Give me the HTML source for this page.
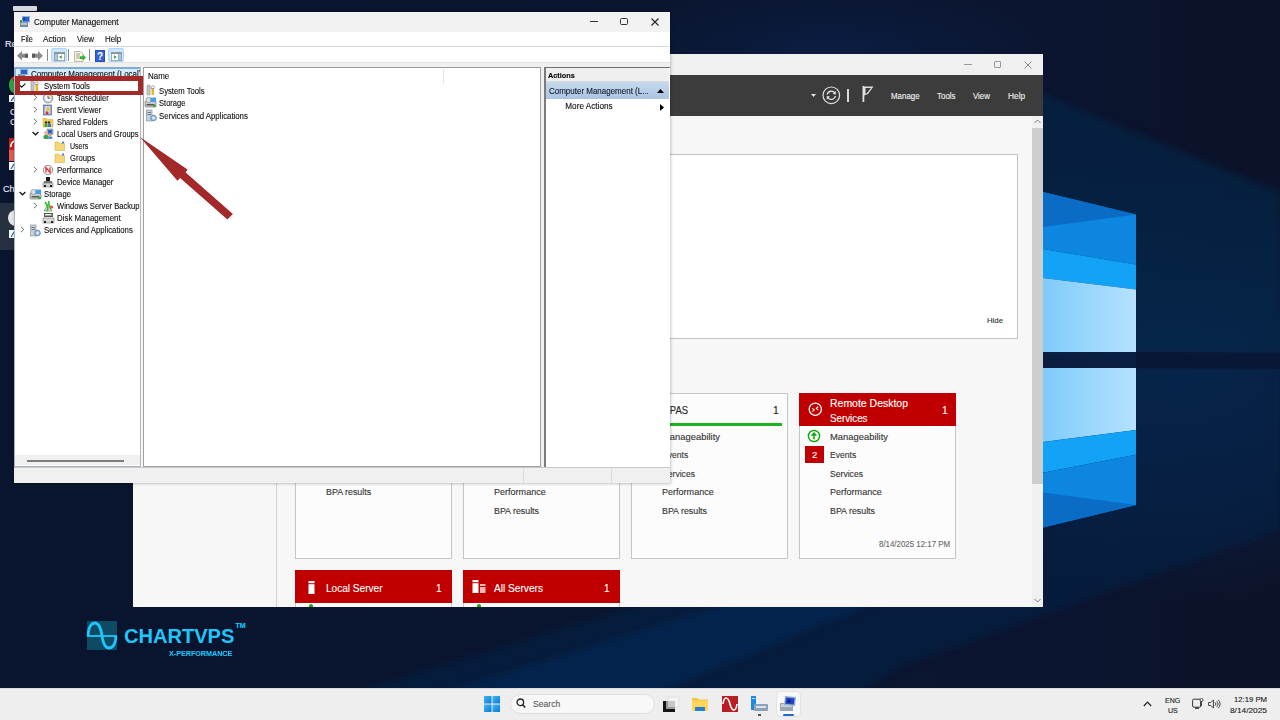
<!DOCTYPE html>
<html><head><meta charset="utf-8">
<style>
*{margin:0;padding:0;box-sizing:border-box}
html,body{width:1280px;height:720px;overflow:hidden}
body{position:relative;font-family:"Liberation Sans",sans-serif;background:#0a1631}
.a{position:absolute}
svg.a{overflow:visible}
.t{position:absolute;white-space:nowrap;font-size:8px;color:#000}
</style></head><body>

<div class="a" style="left:0px;top:0px;width:1280px;height:688px;background:radial-gradient(ellipse 220px 70px at 830px 55px,#0b1d42 0%,rgba(11,29,66,0) 100%),radial-gradient(ellipse 420px 220px at 1180px 380px,#0b2247 0%,rgba(11,34,71,0) 100%),linear-gradient(90deg,#09142e 0%,#0a1630 50%,#0b1530 80%,#0c1329 100%)"></div>
<svg class="a" style="left:0px;top:0px" width="1280" height="688" viewBox="0 0 1280 688"><defs><filter id="bl" x="-10%" y="-10%" width="120%" height="120%"><feGaussianBlur stdDeviation="3.5"/></filter></defs><g filter="url(#bl)"><polygon points="1033,90 1280,193 1280,352 1033,352" fill="#0a2750" opacity=".48"/><polygon points="330,700 1043,480 1136,368 1280,368 1280,530 1197,560 900,667 850,700" fill="#0a2750" opacity=".38"/><polygon points="740,600 880,600 640,700 420,700" fill="#0b3366" opacity=".4"/></g><polygon points="1136,352 1280,353 1280,369 1136,368" fill="#081430" opacity=".7"/></svg>
<svg class="a" style="left:1043px;top:180px" width="100" height="360" viewBox="0 0 100 360"><defs><linearGradient id="lg1" x1="0" y1="0" x2="1" y2="0"><stop offset="0" stop-color="#7fcbfa"/><stop offset="1" stop-color="#b5e2ff"/></linearGradient></defs><polygon points="0,12 93,34.4 93,84.4 0,69" fill="#0d86e0"/><polygon points="0,12 93,34.4 0,47" fill="#0a6cc4"/><polygon points="0,69 93,84.4 93,109.4 0,98" fill="#12a2f6"/><polygon points="0,98 93,109.4 93,172 0,172" fill="url(#lg1)"/><polygon points="0,188 93,188 93,250 0,262" fill="url(#lg1)"/><polygon points="0,262 93,250 93,274.7 0,292.7" fill="#12a2f6"/><polygon points="0,292.7 93,274.7 93,325 0,347.6" fill="#0d86e0"/><polygon points="0,312.6 93,325 0,347.6" fill="#0a6cc4"/></svg>
<div class="t" style="left:5.00px;top:37.28px;font-size:9px;line-height:14px;color:#e8eef8;font-weight:400;letter-spacing:0px;-webkit-text-stroke:0.12px #e8eef8;">Re</div>
<svg class="a" style="left:8px;top:75px" width="7" height="28" viewBox="0 0 7 28"><path d="M7,1 A8,9.5 0 0 0 3.2,3.2 L7,7Z" fill="#d93a2b"/><path d="M3.2,3.2 A8,9.5 0 0 0 7,19 L7,7Z" fill="#2f9e44"/><rect x="1" y="20" width="6" height="7" fill="#fff"/><path d="M3,26 L6,22" stroke="#1d6fd6" stroke-width="1.3"/></svg>
<div class="t" style="left:10.00px;top:104.78px;font-size:9px;line-height:14px;color:#e8eef8;font-weight:400;letter-spacing:0px;-webkit-text-stroke:0.12px #e8eef8;">C</div>
<div class="t" style="left:10.00px;top:114.78px;font-size:9px;line-height:14px;color:#e8eef8;font-weight:400;letter-spacing:0px;-webkit-text-stroke:0.12px #e8eef8;">C</div>
<div class="a" style="left:0px;top:203px;width:14px;height:47px;background:#263041"></div>
<svg class="a" style="left:9px;top:138px" width="6" height="33" viewBox="0 0 6 33"><rect x="0" y="0" width="6" height="23" fill="#c8201c"/><rect x="0" y="12" width="6" height="11" fill="#e05a50"/><path d="M6,3 A5,5 0 0 0 2,9" stroke="#fff" stroke-width="1.6" fill="none"/><rect x="0" y="24" width="6" height="8" fill="#fff"/><path d="M2,31 L5,26" stroke="#1d6fd6" stroke-width="1.3"/></svg>
<div class="t" style="left:3.00px;top:181.78px;font-size:9px;line-height:14px;color:#e8eef8;font-weight:400;letter-spacing:0px;-webkit-text-stroke:0.12px #e8eef8;">Ch</div>
<svg class="a" style="left:9px;top:208px" width="6" height="30" viewBox="0 0 6 30"><circle cx="7" cy="10" r="8" fill="#e8e8e8"/><rect x="0" y="22" width="6" height="8" fill="#fff"/><path d="M2,29 L5,24" stroke="#1d6fd6" stroke-width="1.3"/></svg>
<div class="a" style="left:13px;top:6px;width:24px;height:5px;background:#d5d8de;filter:blur(0.6px);border-radius:1px"></div>
<div class="a" style="left:133px;top:54px;width:910px;height:553px;background:#f7f7f7"></div>
<div class="a" style="left:133px;top:54px;width:910px;height:21px;background:#f0f0f0"></div>
<div class="a" style="left:964px;top:64px;width:8px;height:1px;background:#9a9a9a"></div>
<div class="a" style="left:994px;top:61px;width:7px;height:7px;border:1px solid #9a9a9a;border-radius:1px"></div>
<svg class="a" style="left:1024px;top:61px" width="8" height="8" viewBox="0 0 8 8"><path d="M0.5,0.5 L7.5,7.5 M7.5,0.5 L0.5,7.5" stroke="#8a8a8a" stroke-width="1"/></svg>
<div class="a" style="left:133px;top:75px;width:910px;height:41px;background:#3c3c3c"></div>
<svg class="a" style="left:811px;top:94px" width="5" height="3" viewBox="0 0 5 3"><polygon points="0,0 5,0 2.5,3" fill="#e6e6e6"/></svg>
<svg class="a" style="left:822px;top:86px" width="19" height="19" viewBox="0 0 19 19"><circle cx="9.3" cy="9.3" r="8.3" stroke="#e0e0e0" stroke-width="1.2" fill="none"/><path d="M5.2,8.6 A4.2,4.2 0 0 1 12.8,7 M13.4,10 A4.2,4.2 0 0 1 5.8,11.6" stroke="#e6e6e6" stroke-width="1.3" fill="none"/><polygon points="13.8,5 13.8,8.6 10.6,8" fill="#e6e6e6"/><polygon points="4.8,13.6 4.8,10 8,10.6" fill="#e6e6e6"/></svg>
<div class="a" style="left:847px;top:89px;width:2px;height:13px;background:#d8d8d8"></div>
<svg class="a" style="left:862px;top:86px" width="12" height="16" viewBox="0 0 12 16"><rect x="0.5" y="0" width="1.8" height="16" fill="#e0e0e0"/><polygon points="2,0.5 11.5,0.5 6,8 2,9.5" fill="#e0e0e0"/><polygon points="3.5,2 9,2 5,7 3.5,7.7" fill="#3c3c3c"/></svg>
<div class="t" style="left:891.40px;top:89.08px;font-size:9px;line-height:14px;color:#f2f2f2;font-weight:400;letter-spacing:0px;transform:scaleX(0.8793);transform-origin:0 0;-webkit-text-stroke:0.12px #f2f2f2;">Manage</div>
<div class="t" style="left:936.70px;top:89.08px;font-size:9px;line-height:14px;color:#f2f2f2;font-weight:400;letter-spacing:0px;transform:scaleX(0.8853);transform-origin:0 0;-webkit-text-stroke:0.12px #f2f2f2;">Tools</div>
<div class="t" style="left:972.90px;top:89.08px;font-size:9px;line-height:14px;color:#f2f2f2;font-weight:400;letter-spacing:0px;transform:scaleX(0.8736);transform-origin:0 0;-webkit-text-stroke:0.12px #f2f2f2;">View</div>
<div class="t" style="left:1008.00px;top:89.08px;font-size:9px;line-height:14px;color:#f2f2f2;font-weight:400;letter-spacing:0px;transform:scaleX(0.9292);transform-origin:0 0;-webkit-text-stroke:0.12px #f2f2f2;">Help</div>
<div class="a" style="left:1032px;top:116px;width:11px;height:491px;background:#f0f0f0"></div>
<div class="a" style="left:1032px;top:128px;width:11px;height:356px;background:#cdcdcd"></div>
<svg class="a" style="left:1034px;top:119px" width="7" height="5" viewBox="0 0 7 5"><path d="M0.5,4 L3.5,1 L6.5,4" stroke="#7a7a7a" stroke-width="1" fill="none"/></svg>
<svg class="a" style="left:1034px;top:598px" width="7" height="5" viewBox="0 0 7 5"><path d="M0.5,1 L3.5,4 L6.5,1" stroke="#7a7a7a" stroke-width="1" fill="none"/></svg>
<div class="a" style="left:276px;top:116px;width:1px;height:491px;background:#d2d2d2"></div>
<div class="a" style="left:295px;top:154px;width:722.5px;height:185px;background:#fff;border:1px solid #c2c2c2"></div>
<div class="t" style="left:987.00px;top:315.13px;font-size:8px;line-height:12px;color:#333;font-weight:400;letter-spacing:0px;transform:scaleX(0.9725);transform-origin:0 0;-webkit-text-stroke:0.12px #333;">Hide</div>
<div class="a" style="left:295px;top:393px;width:157px;height:166px;background:#fcfcfc;border:1px solid #c6c6c6"></div>
<div class="a" style="left:463px;top:393px;width:157px;height:166px;background:#fcfcfc;border:1px solid #c6c6c6"></div>
<div class="a" style="left:631px;top:393px;width:157px;height:166px;background:#fcfcfc;border:1px solid #c6c6c6"></div>
<div class="a" style="left:799px;top:393px;width:157px;height:166px;background:#fcfcfc;border:1px solid #c6c6c6"></div>
<div class="a" style="left:799px;top:393px;width:157px;height:33px;background:#c00000"></div>
<svg class="a" style="left:808px;top:402px" width="15" height="15" viewBox="0 0 15 15"><circle cx="7.3" cy="7.2" r="6.1" stroke="#fff" stroke-width="1.3" fill="none"/><path d="M4.4,6.3 L6.3,8 L4.4,9.7 M10.2,4.6 L8.3,6.3 L10.2,8" stroke="#fff" stroke-width="1.1" fill="none"/></svg>
<div class="t" style="left:830.00px;top:396.33px;font-size:10.3px;line-height:15px;color:#fff;font-weight:400;letter-spacing:0px;transform:scaleX(1.0168);transform-origin:0 0;-webkit-text-stroke:0.12px #fff;">Remote Desktop</div>
<div class="t" style="left:830.00px;top:411.03px;font-size:10.3px;line-height:15px;color:#fff;font-weight:400;letter-spacing:0px;transform:scaleX(0.9495);transform-origin:0 0;-webkit-text-stroke:0.12px #fff;">Services</div>
<div class="t" style="left:942.00px;top:403.33px;font-size:10.3px;line-height:15px;color:#fff;font-weight:400;letter-spacing:0px;-webkit-text-stroke:0.12px #fff;">1</div>
<div class="t" style="left:663.06px;top:403.33px;font-size:10.3px;line-height:15px;color:#222;font-weight:400;letter-spacing:0px;transform:scaleX(0.9140);transform-origin:0 0;-webkit-text-stroke:0.12px #222;">NPAS</div>
<div class="t" style="left:773.00px;top:403.33px;font-size:10.3px;line-height:15px;color:#222;font-weight:400;letter-spacing:0px;-webkit-text-stroke:0.12px #222;">1</div>
<div class="a" style="left:647px;top:423px;width:135px;height:3px;background:#1fb21f"></div>
<div class="t" style="left:494.00px;top:429.77px;font-size:9.6px;line-height:14px;color:#333;font-weight:400;letter-spacing:0px;transform:scaleX(0.9791);transform-origin:0 0;-webkit-text-stroke:0.12px #333;">Manageability</div>
<div class="t" style="left:494.00px;top:448.27px;font-size:9.6px;line-height:14px;color:#333;font-weight:400;letter-spacing:0px;transform:scaleX(0.8944);transform-origin:0 0;-webkit-text-stroke:0.12px #333;">Events</div>
<div class="t" style="left:494.00px;top:466.77px;font-size:9.6px;line-height:14px;color:#333;font-weight:400;letter-spacing:0px;transform:scaleX(0.8965);transform-origin:0 0;-webkit-text-stroke:0.12px #333;">Services</div>
<div class="t" style="left:494.00px;top:485.27px;font-size:9.6px;line-height:14px;color:#333;font-weight:400;letter-spacing:0px;transform:scaleX(0.9417);transform-origin:0 0;-webkit-text-stroke:0.12px #333;">Performance</div>
<div class="t" style="left:494.00px;top:503.77px;font-size:9.6px;line-height:14px;color:#333;font-weight:400;letter-spacing:0px;transform:scaleX(0.9201);transform-origin:0 0;-webkit-text-stroke:0.12px #333;">BPA results</div>
<div class="t" style="left:662.00px;top:429.77px;font-size:9.6px;line-height:14px;color:#333;font-weight:400;letter-spacing:0px;transform:scaleX(0.9791);transform-origin:0 0;-webkit-text-stroke:0.12px #333;">Manageability</div>
<div class="t" style="left:662.00px;top:448.27px;font-size:9.6px;line-height:14px;color:#333;font-weight:400;letter-spacing:0px;transform:scaleX(0.8944);transform-origin:0 0;-webkit-text-stroke:0.12px #333;">Events</div>
<div class="t" style="left:662.00px;top:466.77px;font-size:9.6px;line-height:14px;color:#333;font-weight:400;letter-spacing:0px;transform:scaleX(0.8965);transform-origin:0 0;-webkit-text-stroke:0.12px #333;">Services</div>
<div class="t" style="left:662.00px;top:485.27px;font-size:9.6px;line-height:14px;color:#333;font-weight:400;letter-spacing:0px;transform:scaleX(0.9417);transform-origin:0 0;-webkit-text-stroke:0.12px #333;">Performance</div>
<div class="t" style="left:662.00px;top:503.77px;font-size:9.6px;line-height:14px;color:#333;font-weight:400;letter-spacing:0px;transform:scaleX(0.9201);transform-origin:0 0;-webkit-text-stroke:0.12px #333;">BPA results</div>
<div class="t" style="left:830.00px;top:429.77px;font-size:9.6px;line-height:14px;color:#333;font-weight:400;letter-spacing:0px;transform:scaleX(0.9791);transform-origin:0 0;-webkit-text-stroke:0.12px #333;">Manageability</div>
<div class="t" style="left:830.00px;top:448.27px;font-size:9.6px;line-height:14px;color:#333;font-weight:400;letter-spacing:0px;transform:scaleX(0.8944);transform-origin:0 0;-webkit-text-stroke:0.12px #333;">Events</div>
<div class="t" style="left:830.00px;top:466.77px;font-size:9.6px;line-height:14px;color:#333;font-weight:400;letter-spacing:0px;transform:scaleX(0.8965);transform-origin:0 0;-webkit-text-stroke:0.12px #333;">Services</div>
<div class="t" style="left:830.00px;top:485.27px;font-size:9.6px;line-height:14px;color:#333;font-weight:400;letter-spacing:0px;transform:scaleX(0.9417);transform-origin:0 0;-webkit-text-stroke:0.12px #333;">Performance</div>
<div class="t" style="left:830.00px;top:503.77px;font-size:9.6px;line-height:14px;color:#333;font-weight:400;letter-spacing:0px;transform:scaleX(0.9201);transform-origin:0 0;-webkit-text-stroke:0.12px #333;">BPA results</div>
<div class="t" style="left:326.00px;top:485.27px;font-size:9.6px;line-height:14px;color:#333;font-weight:400;letter-spacing:0px;transform:scaleX(0.9242);transform-origin:0 0;-webkit-text-stroke:0.12px #333;">BPA results</div>
<svg class="a" style="left:807px;top:429px" width="14" height="14" viewBox="0 0 14 14"><circle cx="7" cy="7" r="5.6" stroke="#11a811" stroke-width="1.5" fill="#fff"/><path d="M7,10.2 L7,4.5 M4.6,6.8 L7,4.2 L9.4,6.8" stroke="#11a811" stroke-width="1.6" fill="none"/></svg>
<div class="a" style="left:805px;top:446px;width:19px;height:16.5px;background:#c00000"></div>
<div class="t" style="left:812.00px;top:447.81px;font-size:9.5px;line-height:14px;color:#fff;font-weight:400;letter-spacing:0px;-webkit-text-stroke:0.12px #fff;">2</div>
<div class="t" style="left:878.75px;top:539.36px;font-size:8.2px;line-height:12px;color:#6b6b6b;font-weight:400;letter-spacing:0px;transform:scaleX(0.9647);transform-origin:0 0;-webkit-text-stroke:0.12px #6b6b6b;">8/14/2025 12:17 PM</div>
<div class="a" style="left:295px;top:570px;width:157px;height:37px;background:#fcfcfc;border:1px solid #c6c6c6;border-bottom:none"></div>
<div class="a" style="left:295px;top:570px;width:157px;height:33px;background:#c00000"></div>
<div class="t" style="left:326.00px;top:581.33px;font-size:10.3px;line-height:15px;color:#fff;font-weight:400;letter-spacing:0px;transform:scaleX(0.9771);transform-origin:0 0;-webkit-text-stroke:0.12px #fff;">Local Server</div>
<div class="t" style="left:436.00px;top:581.44px;font-size:10px;line-height:15px;color:#fff;font-weight:400;letter-spacing:0px;-webkit-text-stroke:0.12px #fff;">1</div>
<div class="a" style="left:463px;top:570px;width:157px;height:37px;background:#fcfcfc;border:1px solid #c6c6c6;border-bottom:none"></div>
<div class="a" style="left:463px;top:570px;width:157px;height:33px;background:#c00000"></div>
<div class="t" style="left:494.00px;top:581.33px;font-size:10.3px;line-height:15px;color:#fff;font-weight:400;letter-spacing:0px;transform:scaleX(0.9840);transform-origin:0 0;-webkit-text-stroke:0.12px #fff;">All Servers</div>
<div class="t" style="left:604.00px;top:581.44px;font-size:10px;line-height:15px;color:#fff;font-weight:400;letter-spacing:0px;-webkit-text-stroke:0.12px #fff;">1</div>
<svg class="a" style="left:308px;top:581px" width="7" height="13" viewBox="0 0 7 13"><rect x="0.5" y="0" width="6" height="2.2" fill="#fff"/><rect x="0.5" y="3.2" width="6" height="9.8" fill="#fff"/></svg>
<svg class="a" style="left:472px;top:580px" width="14" height="13" viewBox="0 0 14 13"><rect x="0.5" y="0" width="6" height="2.2" fill="#fff"/><rect x="0.5" y="3.2" width="6" height="9.8" fill="#fff"/><rect x="8" y="4" width="5.5" height="2" fill="#f2b8b8"/><rect x="8" y="7" width="5.5" height="6" fill="#f2b8b8"/></svg>
<div class="a" style="left:309px;top:604px;width:4px;height:3px;background:#11a811;border-radius:2px 2px 0 0"></div>
<div class="a" style="left:477px;top:604px;width:4px;height:3px;background:#11a811;border-radius:2px 2px 0 0"></div>
<div class="a" style="left:14px;top:12px;width:656px;height:471px;box-shadow:0 0 2.5px 0.5px rgba(0,0,0,.22)"></div>
<div class="a" style="left:14px;top:12px;width:656px;height:471px;background:#f0f0f0"></div>
<div class="a" style="left:14px;top:12px;width:656px;height:20px;background:#f2f2f2"></div>
<svg class="a" style="left:20px;top:16px" width="10" height="11" viewBox="0 0 10 11"><rect x="0" y="6" width="8" height="5" fill="#7a8a9a"/><rect x="1" y="7" width="6" height="2" fill="#b8c4d0"/><rect x="2" y="0" width="8" height="6.5" fill="#8fb0d8"/><rect x="3" y="1" width="6" height="4.5" fill="#2b63c9"/><circle cx="4" cy="3" r="1.5" fill="#1a3fa0"/><rect x="0" y="4" width="2" height="2" fill="#3aa63a"/></svg>
<div class="t" style="left:34.00px;top:15.79px;font-size:8.7px;line-height:13px;color:#111;font-weight:400;letter-spacing:0px;transform:scaleX(0.9267);transform-origin:0 0;-webkit-text-stroke:0.12px #111;">Computer Management</div>
<div class="a" style="left:590px;top:21px;width:8px;height:1px;background:#333"></div>
<div class="a" style="left:620px;top:18px;width:8px;height:7px;border:1.2px solid #333;border-radius:1.5px"></div>
<svg class="a" style="left:651px;top:18px" width="8" height="8" viewBox="0 0 8 8"><path d="M0.5,0.5 L7.5,7.5 M7.5,0.5 L0.5,7.5" stroke="#222" stroke-width="1.1"/></svg>
<div class="a" style="left:14px;top:32px;width:656px;height:15px;background:#fff"></div>
<div class="a" style="left:14px;top:46px;width:656px;height:1px;background:#d9d9d9"></div>
<div class="t" style="left:20.80px;top:34.06px;font-size:8.2px;line-height:12px;color:#111;font-weight:400;letter-spacing:0px;transform:scaleX(0.8855);transform-origin:0 0;-webkit-text-stroke:0.12px #111;">File</div>
<div class="t" style="left:43.30px;top:34.06px;font-size:8.2px;line-height:12px;color:#111;font-weight:400;letter-spacing:0px;transform:scaleX(0.9960);transform-origin:0 0;-webkit-text-stroke:0.12px #111;">Action</div>
<div class="t" style="left:77.00px;top:34.06px;font-size:8.2px;line-height:12px;color:#111;font-weight:400;letter-spacing:0px;transform:scaleX(0.9645);transform-origin:0 0;-webkit-text-stroke:0.12px #111;">View</div>
<div class="t" style="left:104.70px;top:34.06px;font-size:8.2px;line-height:12px;color:#111;font-weight:400;letter-spacing:0px;transform:scaleX(0.9665);transform-origin:0 0;-webkit-text-stroke:0.12px #111;">Help</div>
<div class="a" style="left:14px;top:47px;width:656px;height:15px;background:#fff"></div>
<div class="a" style="left:14px;top:62px;width:656px;height:1px;background:#e3e3e3"></div>
<div class="a" style="left:14px;top:63px;width:656px;height:4px;background:#f0f0f0"></div>
<svg class="a" style="left:17px;top:51px" width="11" height="10" viewBox="0 0 11 10"><polygon points="0,4.7 5,0 5,2.7 11,2.7 11,6.7 5,6.7 5,9.5" fill="#8c8c8c"/><rect x="8" y="2.7" width="3" height="4" fill="#5c5c5c"/></svg>
<svg class="a" style="left:32px;top:51px" width="11" height="10" viewBox="0 0 11 10"><polygon points="11,4.7 6,0 6,2.7 0,2.7 0,6.7 6,6.7 6,9.5" fill="#8c8c8c"/><rect x="0" y="2.7" width="3" height="4" fill="#5c5c5c"/></svg>
<div class="a" style="left:47px;top:49px;width:1px;height:12px;background:#8a8a8a"></div>
<div class="a" style="left:51px;top:48px;width:16px;height:14px;background:#cce8ff;border:1px solid #a8d8ff;border-radius:2px"></div>
<svg class="a" style="left:54px;top:52px" width="11" height="9" viewBox="0 0 11 9"><rect x="0" y="0" width="11" height="9" fill="#8e96a0"/><rect x="0.8" y="2" width="2.6" height="6.2" fill="#aac8e8"/><rect x="4" y="2" width="6.2" height="6.2" fill="#fff"/><polygon points="5.2,5.1 7.6,3.2 7.6,7" fill="#17a317"/></svg>
<div class="a" style="left:68px;top:49px;width:1px;height:12px;background:#8a8a8a"></div>
<svg class="a" style="left:74px;top:51px" width="12" height="11" viewBox="0 0 12 11"><path d="M0.5,0.5 L6.5,0.5 L9,3 L9,10.5 L0.5,10.5Z" fill="#f8f4e0" stroke="#a8a8a0" stroke-width=".8"/><path d="M2,3 L6,3 M2,5 L6,5 M2,7 L6,7" stroke="#8a8a80" stroke-width=".8"/><polygon points="6,5.2 9,5.2 9,3.6 12,6.6 9,9.6 9,8 6,8" fill="#2fb52f"/></svg>
<div class="a" style="left:89px;top:49px;width:1px;height:12px;background:#8a8a8a"></div>
<svg class="a" style="left:95px;top:50px" width="10" height="12" viewBox="0 0 10 12"><rect x="0" y="0" width="10" height="12" fill="#1f48b8"/><rect x="0.7" y="0.7" width="8.6" height="10.6" fill="#3362d6"/><text x="5" y="9.8" font-family="Liberation Sans" font-weight="700" font-size="10" text-anchor="middle" fill="#fff">?</text></svg>
<div class="a" style="left:108px;top:48px;width:16px;height:14px;background:#cce8ff;border:1px solid #a8d8ff;border-radius:2px"></div>
<svg class="a" style="left:111px;top:52px" width="11" height="9" viewBox="0 0 11 9"><rect x="0" y="0" width="11" height="9" fill="#8e96a0"/><rect x="7.6" y="2" width="2.6" height="6.2" fill="#aac8e8"/><rect x="0.8" y="2" width="6.2" height="6.2" fill="#fff"/><polygon points="5.6,5.1 3.2,3.2 3.2,7" fill="#17a317"/></svg>
<div class="a" style="left:14px;top:67px;width:127px;height:400px;background:#fff;border:1px solid #a9b4c0;border-top-color:#8fa6bf"></div>
<div class="a" style="left:15px;top:67.5px;width:125px;height:9px;background:#d6eafb;border-top:1px solid #6fb2ee;border-left:1px solid #6fb2ee"></div>
<svg class="a" style="left:17.5px;top:68.5px" width="10" height="9" viewBox="0 0 10 9"><rect x="0" y="5" width="7" height="4" fill="#7a8a9a"/><rect x="2" y="0" width="8" height="6" fill="#8fb0d8"/><rect x="3" y="1" width="6" height="4" fill="#2b63c9"/></svg>
<div class="t" style="left:31.00px;top:69.36px;font-size:8.2px;line-height:12px;color:#111;font-weight:400;letter-spacing:0px;transform:scaleX(0.9750);transform-origin:0 0;-webkit-text-stroke:0.12px #111;">Computer Management (Local)</div>
<div class="a" style="left:141px;top:67px;width:2px;height:400px;background:#f7f7f7"></div>
<div class="a" style="left:143px;top:67px;width:398px;height:400px;background:#fff;border:1px solid #a0a0a0;border-top:1.5px solid #9a9a9a"></div>
<div class="a" style="left:544px;top:67px;width:126px;height:400px;background:#fff;border-left:2px solid #7c7c7c;border-top:1.5px solid #707070"></div>
<div class="a" style="left:14px;top:467px;width:656px;height:16px;background:#f0f0f0;border-top:1px solid #c8c8c8"></div>
<div class="a" style="left:523px;top:468px;width:1px;height:15px;background:#dadada"></div>
<div class="a" style="left:611px;top:468px;width:1px;height:15px;background:#dadada"></div>
<div class="a" style="left:15px;top:455px;width:125px;height:10px;background:#f0f0f0"></div>
<div class="a" style="left:27px;top:460px;width:97px;height:1.6px;background:#7d7d7d"></div>
<svg class="a" style="left:19px;top:83.3px" width="7" height="5" viewBox="0 0 7 5"><path d="M0.6,2.2 L2.6,4.2 L6.4,0.6" stroke="#111" stroke-width="1.2" fill="none"/></svg>
<svg class="a" style="left:30.299999999999997px;top:80.8px" width="11" height="11" viewBox="0 0 11 11"><rect x="1" y="0" width="3" height="10" rx="1" fill="#c8c8c8" stroke="#8a8a8a" stroke-width=".6"/><rect x="5.5" y="3" width="2.5" height="7" fill="#e8b820"/><circle cx="6.7" cy="2.5" r="1.7" fill="none" stroke="#8a8a8a" stroke-width=".8"/></svg>
<div class="t" style="left:43.80px;top:80.86px;font-size:8.2px;line-height:12px;color:#111;font-weight:400;letter-spacing:0px;transform:scaleX(0.9463);transform-origin:0 0;-webkit-text-stroke:0.12px #111;">System Tools</div>
<svg class="a" style="left:32.8px;top:94.3px" width="5" height="7" viewBox="0 0 5 7"><path d="M1,0.8 L3.8,3.5 L1,6.2" stroke="#6a6a6a" stroke-width="1" fill="none"/></svg>
<svg class="a" style="left:43.3px;top:92.8px" width="11" height="11" viewBox="0 0 11 11"><circle cx="5" cy="5.2" r="4.8" fill="#b4bcc6" stroke="#7d8894" stroke-width=".7"/><circle cx="5" cy="5.2" r="3.4" fill="#f4f6f8"/><path d="M5,2.6 L5,5.2 L7.2,5.2" stroke="#444" stroke-width=".9" fill="none"/><path d="M6.5,0.6 A4.8,4.8 0 0 1 9.6,3.6 L6.5,3.6Z" fill="#e8c040"/></svg>
<div class="t" style="left:56.80px;top:92.86px;font-size:8.2px;line-height:12px;color:#111;font-weight:400;letter-spacing:0px;transform:scaleX(0.9250);transform-origin:0 0;-webkit-text-stroke:0.12px #111;">Task Scheduler</div>
<svg class="a" style="left:32.8px;top:106.3px" width="5" height="7" viewBox="0 0 5 7"><path d="M1,0.8 L3.8,3.5 L1,6.2" stroke="#6a6a6a" stroke-width="1" fill="none"/></svg>
<svg class="a" style="left:43.3px;top:104.8px" width="11" height="11" viewBox="0 0 11 11"><rect x="0.5" y="0" width="8" height="10" fill="#7a94c0" stroke="#4a5c80" stroke-width=".6"/><rect x="1.5" y="1" width="6" height="8" fill="#c9d6ee"/><polygon points="5,1.5 7.3,5.5 2.7,5.5" fill="#f2c41e"/><circle cx="4" cy="7.8" r="1.5" fill="#e03030"/></svg>
<div class="t" style="left:56.80px;top:104.86px;font-size:8.2px;line-height:12px;color:#111;font-weight:400;letter-spacing:0px;transform:scaleX(0.9177);transform-origin:0 0;-webkit-text-stroke:0.12px #111;">Event Viewer</div>
<svg class="a" style="left:32.8px;top:118.3px" width="5" height="7" viewBox="0 0 5 7"><path d="M1,0.8 L3.8,3.5 L1,6.2" stroke="#6a6a6a" stroke-width="1" fill="none"/></svg>
<svg class="a" style="left:43.3px;top:116.8px" width="11" height="11" viewBox="0 0 11 11"><path d="M0,1.5 L3.5,1.5 L4.5,2.5 L10,2.5 L10,10 L0,10Z" fill="#f0cf60" stroke="#c8a030" stroke-width=".5"/><circle cx="3" cy="5.5" r="1.3" fill="#333"/><circle cx="6" cy="5.5" r="1.3" fill="#333"/><rect x="1.5" y="7" width="3" height="3" fill="#3aa04a"/><rect x="5" y="7" width="3" height="3" fill="#3a7ad0"/></svg>
<div class="t" style="left:56.80px;top:116.86px;font-size:8.2px;line-height:12px;color:#111;font-weight:400;letter-spacing:0px;transform:scaleX(0.9079);transform-origin:0 0;-webkit-text-stroke:0.12px #111;">Shared Folders</div>
<svg class="a" style="left:32.3px;top:131.3px" width="7" height="5" viewBox="0 0 7 5"><path d="M0.6,1 L3.5,3.8 L6.4,1" stroke="#111" stroke-width="1.2" fill="none"/></svg>
<svg class="a" style="left:43.3px;top:128.8px" width="11" height="11" viewBox="0 0 11 11"><rect x="4" y="0" width="6" height="5.5" fill="#9ab4d4" stroke="#6a7a90" stroke-width=".5"/><rect x="5" y="1" width="4" height="3.5" fill="#2b63c9"/><circle cx="3" cy="4" r="2" fill="#e8b890"/><rect x="0.5" y="6" width="5" height="4" rx="1.5" fill="#3aa04a"/><circle cx="7" cy="6" r="1.6" fill="#d0a070"/><rect x="5" y="7.5" width="4.5" height="2.5" rx="1" fill="#4a90e0"/></svg>
<div class="t" style="left:56.80px;top:128.86px;font-size:8.2px;line-height:12px;color:#111;font-weight:400;letter-spacing:0px;transform:scaleX(0.9240);transform-origin:0 0;-webkit-text-stroke:0.12px #111;">Local Users and Groups</div>
<svg class="a" style="left:55.0px;top:140.8px" width="11" height="11" viewBox="0 0 11 11"><path d="M0,1 L3.5,1 L4.5,2.3 L9.5,2.3 L9.5,9.5 L0,9.5Z" fill="#f5d77a" stroke="#d6b04a" stroke-width=".6"/><rect x="7" y="0.5" width="2" height="2" fill="#3a8ad0"/></svg>
<div class="t" style="left:69.50px;top:140.86px;font-size:8.2px;line-height:12px;color:#111;font-weight:400;letter-spacing:0px;transform:scaleX(0.8593);transform-origin:0 0;-webkit-text-stroke:0.12px #111;">Users</div>
<svg class="a" style="left:55.0px;top:152.8px" width="11" height="11" viewBox="0 0 11 11"><path d="M0,1 L3.5,1 L4.5,2.3 L9.5,2.3 L9.5,9.5 L0,9.5Z" fill="#f5d77a" stroke="#d6b04a" stroke-width=".6"/><rect x="7" y="0.5" width="2" height="2" fill="#3a8ad0"/></svg>
<div class="t" style="left:69.50px;top:152.86px;font-size:8.2px;line-height:12px;color:#111;font-weight:400;letter-spacing:0px;transform:scaleX(0.9334);transform-origin:0 0;-webkit-text-stroke:0.12px #111;">Groups</div>
<svg class="a" style="left:32.8px;top:166.3px" width="5" height="7" viewBox="0 0 5 7"><path d="M1,0.8 L3.8,3.5 L1,6.2" stroke="#6a6a6a" stroke-width="1" fill="none"/></svg>
<svg class="a" style="left:43.3px;top:164.8px" width="11" height="11" viewBox="0 0 11 11"><circle cx="5" cy="5" r="4.7" fill="#f4f4f4" stroke="#7a7a7a" stroke-width=".8"/><path d="M3,7.5 L3,2.5 L7,7.5 L7,2.5" stroke="#e02020" stroke-width="1.2" fill="none"/></svg>
<div class="t" style="left:56.80px;top:164.86px;font-size:8.2px;line-height:12px;color:#111;font-weight:400;letter-spacing:0px;transform:scaleX(0.9640);transform-origin:0 0;-webkit-text-stroke:0.12px #111;">Performance</div>
<svg class="a" style="left:43.3px;top:176.8px" width="11" height="11" viewBox="0 0 11 11"><rect x="3" y="0" width="4" height="4" fill="#1a1a1a"/><rect x="1" y="4" width="8" height="2" fill="#777"/><rect x="0" y="6" width="10" height="4" fill="#d0d0d0" stroke="#666" stroke-width=".5"/><rect x="1" y="8" width="2" height="2" fill="#222"/><rect x="7" y="8" width="2" height="2" fill="#222"/></svg>
<div class="t" style="left:56.80px;top:176.86px;font-size:8.2px;line-height:12px;color:#111;font-weight:400;letter-spacing:0px;transform:scaleX(0.9463);transform-origin:0 0;-webkit-text-stroke:0.12px #111;">Device Manager</div>
<svg class="a" style="left:19.299999999999997px;top:191.3px" width="7" height="5" viewBox="0 0 7 5"><path d="M0.6,1 L3.5,3.8 L6.4,1" stroke="#111" stroke-width="1.2" fill="none"/></svg>
<svg class="a" style="left:30.299999999999997px;top:188.8px" width="11" height="11" viewBox="0 0 11 11"><rect x="0" y="4" width="11" height="6" rx="1" fill="#c8ccd0" stroke="#6a6a6a" stroke-width=".6"/><rect x="1.5" y="7" width="8" height="1.5" fill="#555"/><circle cx="3.5" cy="3" r="2.6" fill="#e0e0e0" stroke="#777" stroke-width=".6"/><rect x="5.5" y="0.5" width="5.5" height="4.5" fill="#4aa0e8"/><rect x="8" y="8" width="3" height="2" fill="#3ab03a"/></svg>
<div class="t" style="left:43.80px;top:188.86px;font-size:8.2px;line-height:12px;color:#111;font-weight:400;letter-spacing:0px;transform:scaleX(0.9401);transform-origin:0 0;-webkit-text-stroke:0.12px #111;">Storage</div>
<svg class="a" style="left:32.8px;top:202.3px" width="5" height="7" viewBox="0 0 5 7"><path d="M1,0.8 L3.8,3.5 L1,6.2" stroke="#6a6a6a" stroke-width="1" fill="none"/></svg>
<svg class="a" style="left:43.3px;top:200.8px" width="11" height="11" viewBox="0 0 11 11"><path d="M1,10 L5,3 L9,10Z" fill="#e0e0e0" stroke="#666" stroke-width=".6"/><path d="M2,1 C4,4 6,6 4,10" stroke="#30c030" stroke-width="1.8" fill="none"/><path d="M6,0 C5,3 7,6 8,8" stroke="#30c030" stroke-width="1.6" fill="none"/><circle cx="8.5" cy="6" r="1.6" fill="#d06030"/></svg>
<div class="t" style="left:56.80px;top:200.86px;font-size:8.2px;line-height:12px;color:#111;font-weight:400;letter-spacing:0px;transform:scaleX(0.9250);transform-origin:0 0;-webkit-text-stroke:0.12px #111;">Windows Server Backup</div>
<svg class="a" style="left:43.3px;top:212.8px" width="11" height="11" viewBox="0 0 11 11"><rect x="1" y="0" width="9" height="4" fill="#555" /><rect x="2" y="1" width="7" height="1.5" fill="#eee"/><rect x="8" y="1" width="2" height="1.5" fill="#3ab03a"/><rect x="0" y="5" width="11" height="5" fill="#d8d8d8" stroke="#666" stroke-width=".5"/><rect x="1" y="8" width="2" height="2" fill="#222"/><rect x="8" y="8" width="2" height="2" fill="#222"/></svg>
<div class="t" style="left:56.80px;top:212.86px;font-size:8.2px;line-height:12px;color:#111;font-weight:400;letter-spacing:0px;transform:scaleX(0.9647);transform-origin:0 0;-webkit-text-stroke:0.12px #111;">Disk Management</div>
<svg class="a" style="left:20.299999999999997px;top:226.3px" width="5" height="7" viewBox="0 0 5 7"><path d="M1,0.8 L3.8,3.5 L1,6.2" stroke="#6a6a6a" stroke-width="1" fill="none"/></svg>
<svg class="a" style="left:30.299999999999997px;top:224.8px" width="11" height="11" viewBox="0 0 11 11"><rect x="0.5" y="0" width="5.5" height="11" fill="#c8d0d8" stroke="#7a8a9a" stroke-width=".6"/><rect x="1.5" y="2" width="3.5" height="1" fill="#6a7a8a"/><rect x="1.5" y="4" width="3.5" height="1" fill="#6a7a8a"/><circle cx="7.5" cy="8" r="2.8" fill="#a8c8e8" stroke="#4a7ab0" stroke-width=".8"/><circle cx="7.5" cy="8" r="1" fill="#fff"/></svg>
<div class="t" style="left:43.80px;top:224.86px;font-size:8.2px;line-height:12px;color:#111;font-weight:400;letter-spacing:0px;transform:scaleX(0.9524);transform-origin:0 0;-webkit-text-stroke:0.12px #111;">Services and Applications</div>
<div class="a" style="left:140px;top:67px;width:3px;height:400px;background:#f7f7f7;border-left:1px solid #b4b8bf"></div>
<div class="a" style="left:15px;top:76px;width:128px;height:19px;border:5px solid #a42a2a;border-bottom-width:4.7px"></div>
<div class="t" style="left:148.00px;top:70.86px;font-size:8.2px;line-height:12px;color:#111;font-weight:400;letter-spacing:0px;transform:scaleX(0.9692);transform-origin:0 0;-webkit-text-stroke:0.12px #111;">Name</div>
<div class="a" style="left:443px;top:69px;width:1px;height:15px;background:#e5e5e5"></div>
<svg class="a" style="left:146px;top:85px" width="10" height="11" viewBox="0 0 10 11"><rect x="1" y="0" width="3" height="10" rx="1" fill="#c8c8c8" stroke="#8a8a8a" stroke-width=".6"/><rect x="5.5" y="3" width="2.5" height="7" fill="#e8b820"/><circle cx="6.7" cy="2.5" r="1.7" fill="none" stroke="#8a8a8a" stroke-width=".8"/></svg>
<div class="t" style="left:158.70px;top:85.66px;font-size:8.2px;line-height:12px;color:#111;font-weight:400;letter-spacing:0px;transform:scaleX(0.9401);transform-origin:0 0;-webkit-text-stroke:0.12px #111;">System Tools</div>
<svg class="a" style="left:145px;top:97px" width="11" height="11" viewBox="0 0 11 11"><rect x="0" y="4" width="11" height="6" rx="1" fill="#c8ccd0" stroke="#6a6a6a" stroke-width=".6"/><rect x="1.5" y="7" width="8" height="1.5" fill="#555"/><circle cx="3.5" cy="3" r="2.6" fill="#e0e0e0" stroke="#777" stroke-width=".6"/><rect x="5.5" y="0.5" width="5.5" height="4.5" fill="#4aa0e8"/><rect x="8" y="8" width="3" height="2" fill="#3ab03a"/></svg>
<div class="t" style="left:158.70px;top:98.26px;font-size:8.2px;line-height:12px;color:#111;font-weight:400;letter-spacing:0px;transform:scaleX(0.9227);transform-origin:0 0;-webkit-text-stroke:0.12px #111;">Storage</div>
<svg class="a" style="left:146px;top:110px" width="11" height="11" viewBox="0 0 11 11"><rect x="0.5" y="0" width="5.5" height="11" fill="#c8d0d8" stroke="#7a8a9a" stroke-width=".6"/><rect x="1.5" y="2" width="3.5" height="1" fill="#6a7a8a"/><rect x="1.5" y="4" width="3.5" height="1" fill="#6a7a8a"/><circle cx="7.5" cy="8" r="2.8" fill="#a8c8e8" stroke="#4a7ab0" stroke-width=".8"/><circle cx="7.5" cy="8" r="1" fill="#fff"/></svg>
<div class="t" style="left:158.70px;top:110.86px;font-size:8.2px;line-height:12px;color:#111;font-weight:400;letter-spacing:0px;transform:scaleX(0.9524);transform-origin:0 0;-webkit-text-stroke:0.12px #111;">Services and Applications</div>
<div class="a" style="left:546px;top:68px;width:123px;height:13.5px;background:#efefef;border-bottom:1px solid #dadada"></div>
<div class="t" style="left:548.20px;top:70.10px;font-size:7.8px;line-height:12px;color:#000;font-weight:700;letter-spacing:0px;transform:scaleX(0.9370);transform-origin:0 0;-webkit-text-stroke:0.12px #000;">Actions</div>
<div class="a" style="left:546px;top:82px;width:123px;height:17px;background:linear-gradient(#c6daee,#a9c4e2)"></div>
<div class="t" style="left:549.30px;top:85.96px;font-size:8.2px;line-height:12px;color:#1a1a2a;font-weight:400;letter-spacing:0px;transform:scaleX(0.9751);transform-origin:0 0;-webkit-text-stroke:0.12px #1a1a2a;">Computer Management (L...</div>
<svg class="a" style="left:657px;top:89px" width="7" height="4" viewBox="0 0 7 4"><polygon points="0,4 3.5,0 7,4" fill="#000"/></svg>
<div class="t" style="left:565.30px;top:101.46px;font-size:8.2px;line-height:12px;color:#111;font-weight:400;letter-spacing:0px;transform:scaleX(1.0000);transform-origin:0 0;-webkit-text-stroke:0.12px #111;">More Actions</div>
<svg class="a" style="left:660px;top:103.5px" width="4" height="7" viewBox="0 0 4 7"><polygon points="0,0 4,3.5 0,7" fill="#000"/></svg>
<svg class="a" style="left:0px;top:0px" width="300" height="300" viewBox="0 0 300 300"><polygon points="139.9,136.9 187.5,169.6 185.7,172.4 232.9,214 227.4,219.6 180.1,177.9 177.4,180.7" fill="#a3282a"/></svg>
<svg class="a" style="left:87px;top:621px" width="30" height="29" viewBox="0 0 30 29"><rect width="30" height="29" fill="#0d4b64"/><path d="M1.2,15 C1.2,5 5,2 8,2 C12,2 14,8 15,15 C16,22 18,27 22,27 C25,27 28.8,24 28.8,15" stroke="#1ec6fc" stroke-width="2.8" fill="none"/><path d="M0,15 L30,15" stroke="#1ec6fc" stroke-width="1.8"/></svg>
<div class="t" style="left:124.40px;top:621.64px;font-size:19.5px;line-height:29px;color:#1ec6fc;font-weight:700;letter-spacing:0px;transform:scaleX(1.0283);transform-origin:0 0;-webkit-text-stroke:0.12px #1ec6fc;">CHARTVPS</div>
<div class="t" style="left:235.50px;top:620.97px;font-size:7px;line-height:10px;color:#1ec6fc;font-weight:700;letter-spacing:0px;-webkit-text-stroke:0.12px #1ec6fc;">TM</div>
<div class="t" style="left:169.40px;top:647.51px;font-size:7.2px;line-height:11px;color:#1ec6fc;font-weight:700;letter-spacing:0px;transform:scaleX(0.9968);transform-origin:0 0;-webkit-text-stroke:0.12px #1ec6fc;">X-PERFORMANCE</div>
<div class="a" style="left:0px;top:688px;width:1280px;height:32px;background:#eeeeee;border-top:1px solid #d9dce0"></div>
<svg class="a" style="left:484px;top:696px" width="16" height="16" viewBox="0 0 16 16"><defs><linearGradient id="wl" x1="0" y1="0" x2="1" y2="1"><stop offset="0" stop-color="#3fbaf6"/><stop offset="1" stop-color="#0a78d6"/></linearGradient></defs><rect x="0" y="0" width="7.5" height="7.5" fill="url(#wl)"/><rect x="8.5" y="0" width="7.5" height="7.5" fill="url(#wl)"/><rect x="0" y="8.5" width="7.5" height="7.5" fill="url(#wl)"/><rect x="8.5" y="8.5" width="7.5" height="7.5" fill="url(#wl)"/></svg>
<div class="a" style="left:510px;top:694px;width:145px;height:20px;background:#f8f8f8;border:1px solid #dedede;border-radius:10px"></div>
<svg class="a" style="left:516px;top:698px" width="10" height="11" viewBox="0 0 10 11"><circle cx="4.3" cy="4.3" r="3.3" stroke="#222" stroke-width="1.3" fill="none"/><path d="M6.7,6.7 L9.3,9.5" stroke="#222" stroke-width="1.4"/></svg>
<div class="t" style="left:533.30px;top:698.39px;font-size:8.7px;line-height:13px;color:#5a5a5a;font-weight:400;letter-spacing:0px;transform:scaleX(0.9904);transform-origin:0 0;-webkit-text-stroke:0.12px #5a5a5a;">Search</div>
<svg class="a" style="left:663px;top:697px" width="17" height="15" viewBox="0 0 17 15"><rect x="5" y="0" width="11" height="10" fill="#f4f4f4" stroke="#d8d8d8" stroke-width=".6"/><rect x="0" y="4" width="12" height="11" fill="#151515"/><rect x="3" y="4" width="9" height="8" fill="#9a9a9a"/><rect x="5" y="4" width="7" height="6" fill="#c8c8c8"/></svg>
<svg class="a" style="left:692px;top:697px" width="17" height="14" viewBox="0 0 17 14"><path d="M0,1 L5,1 L6.5,2.5 L16,2.5 L16,14 L0,14Z" fill="#f5c142"/><rect x="0" y="3.5" width="16" height="10.5" fill="#fcd55a"/><rect x="3" y="10" width="10" height="4" fill="#1f80d8"/></svg>
<svg class="a" style="left:722px;top:696px" width="16" height="16" viewBox="0 0 16 16"><rect width="16" height="16" fill="#b81e24"/><path d="M1,8 C2,0 6,0 8,8 C10,16 14,16 15,8" stroke="#fff" stroke-width="1.6" fill="none"/></svg>
<svg class="a" style="left:751px;top:696px" width="17" height="16" viewBox="0 0 17 16"><rect x="0" y="0" width="5" height="14" fill="#1c8ae0"/><rect x="0.8" y="2" width="3.4" height="1" fill="#bfe0ff"/><rect x="3" y="8" width="14" height="7" rx="1" fill="#8da2b4"/><rect x="5" y="10" width="10" height="2" fill="#d8e2ea"/></svg>
<div class="a" style="left:758px;top:714px;width:3px;height:1.5px;background:#555"></div>
<div class="a" style="left:776px;top:691px;width:25px;height:26px;background:#f8f8f8;border:1px solid #e2e2e2;border-radius:4px"></div>
<svg class="a" style="left:780px;top:696px" width="17" height="15" viewBox="0 0 17 15"><rect x="0" y="7" width="13" height="8" fill="#9aa6b2"/><rect x="1" y="8" width="11" height="3" fill="#c8d0d8"/><polygon points="5,0 16,1 15,10 4,9" fill="#8fb0d8"/><polygon points="6,1.5 14.5,2.3 13.8,8.6 5.3,7.8" fill="#2444c0"/><circle cx="9" cy="5" r="1.6" fill="#0c1a80"/></svg>
<div class="a" style="left:783px;top:714px;width:11px;height:2px;background:#1a6ad6;border-radius:1px"></div>
<svg class="a" style="left:1143px;top:701px" width="9" height="6" viewBox="0 0 9 6"><path d="M0.8,5 L4.5,1.2 L8.2,5" stroke="#222" stroke-width="1.2" fill="none"/></svg>
<div class="t" style="left:1165.00px;top:695.10px;font-size:7.5px;line-height:11px;color:#222;font-weight:400;letter-spacing:0px;transform:scaleX(0.9352);transform-origin:0 0;-webkit-text-stroke:0.12px #222;">ENG</div>
<div class="t" style="left:1167.70px;top:705.40px;font-size:7.5px;line-height:11px;color:#222;font-weight:400;letter-spacing:0px;transform:scaleX(0.9406);transform-origin:0 0;-webkit-text-stroke:0.12px #222;">US</div>
<svg class="a" style="left:1192px;top:698px" width="12" height="12" viewBox="0 0 12 12"><rect x="0.6" y="1.2" width="8" height="8" rx="1.2" stroke="#333" stroke-width="1" fill="none"/><rect x="3" y="9.5" width="4" height="1.4" fill="#333"/><circle cx="9.5" cy="2" r="1.5" fill="#fff" stroke="#333" stroke-width=".9"/><path d="M9.5,3.5 L9.5,8" stroke="#333" stroke-width=".9"/></svg>
<svg class="a" style="left:1208px;top:699px" width="12" height="10" viewBox="0 0 12 10"><path d="M0.6,3.5 L2.8,3.5 L5.5,1 L5.5,9 L2.8,6.5 L0.6,6.5Z" stroke="#333" stroke-width=".9" fill="none"/><path d="M7,3.3 A2.2,2.2 0 0 1 7,6.7 M8.6,2 A4,4 0 0 1 8.6,8 M10.2,0.8 A5.6,5.6 0 0 1 10.2,9.2" stroke="#333" stroke-width=".9" fill="none"/></svg>
<div class="t" style="left:1234.30px;top:693.70px;font-size:7.8px;line-height:12px;color:#222;font-weight:400;letter-spacing:0px;transform:scaleX(0.9884);transform-origin:0 0;-webkit-text-stroke:0.12px #222;">12:19 PM</div>
<div class="t" style="left:1230.20px;top:704.70px;font-size:7.8px;line-height:12px;color:#222;font-weight:400;letter-spacing:0px;transform:scaleX(1.0663);transform-origin:0 0;-webkit-text-stroke:0.12px #222;">8/14/2025</div>
</body></html>
